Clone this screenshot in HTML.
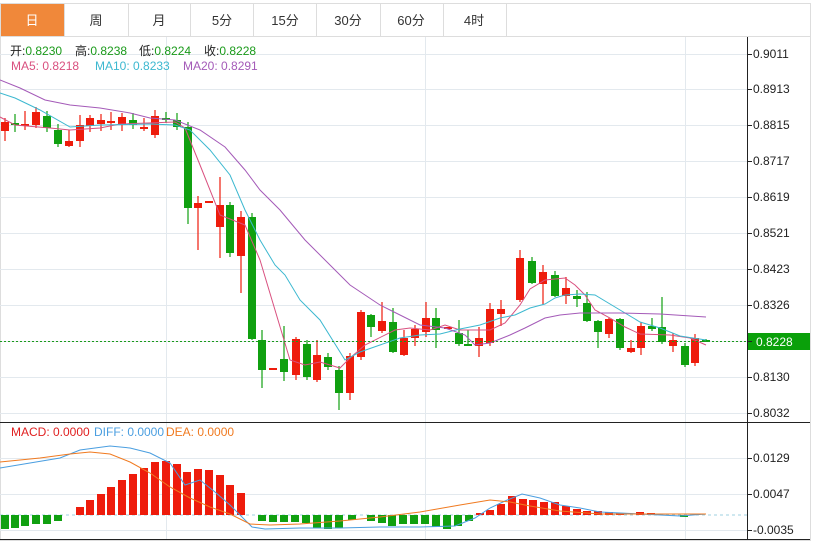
<!DOCTYPE html>
<html><head><meta charset="utf-8"><style>
body{margin:0;width:816px;height:542px;background:#fff;overflow:hidden;font-family:"Liberation Sans","Noto Sans CJK SC",sans-serif;}
</style></head><body>
<svg id="s" width="816" height="542" xmlns="http://www.w3.org/2000/svg" style="position:absolute;left:0;top:0">
<rect x="0.5" y="3.5" width="810" height="537" fill="#fff" stroke="#ddd"/>
<line x1="0" y1="36.5" x2="810" y2="36.5" stroke="#ddd"/>
<rect x="1" y="4" width="63" height="32" fill="#f0883a"/>
<g font-size="13" text-anchor="middle" fill="#333">
<text x="32" y="25" fill="#fff">日</text><text x="96" y="25">周</text><text x="159" y="25">月</text><text x="222" y="25">5分</text><text x="285" y="25">15分</text><text x="348" y="25">30分</text><text x="411" y="25">60分</text><text x="474" y="25">4时</text>
</g>
<g stroke="#ddd"><line x1="64.5" y1="4" x2="64.5" y2="36"/><line x1="128.5" y1="4" x2="128.5" y2="36"/><line x1="190.5" y1="4" x2="190.5" y2="36"/><line x1="253.5" y1="4" x2="253.5" y2="36"/><line x1="316.5" y1="4" x2="316.5" y2="36"/><line x1="380.5" y1="4" x2="380.5" y2="36"/><line x1="443.5" y1="4" x2="443.5" y2="36"/><line x1="506.5" y1="4" x2="506.5" y2="36"/></g>
<g id="grid" stroke="#e3e9ee"></g>
<g id="c"></g>
<line x1="747.5" y1="37" x2="747.5" y2="540" stroke="#222"/>
<line x1="0" y1="422.5" x2="810" y2="422.5" stroke="#222"/>
<line x1="0" y1="539.5" x2="810" y2="539.5" stroke="#222"/>
<line x1="0" y1="341.5" x2="747" y2="341.5" stroke="#1a9a1a" stroke-dasharray="2,2"/>
<rect x="748" y="333" width="62" height="17" fill="#0aa00a"/>
<text x="756" y="346" font-size="12" fill="#fff">0.8228</text>
<g font-size="12" fill="#222" id="ax"></g>
<g font-size="12">
<text x="10" y="55" fill="#222">开:<tspan fill="#1a9a1a">0.8230</tspan></text>
<text x="75" y="55" fill="#222">高:<tspan fill="#1a9a1a">0.8238</tspan></text>
<text x="139" y="55" fill="#222">低:<tspan fill="#1a9a1a">0.8224</tspan></text>
<text x="204" y="55" fill="#222">收:<tspan fill="#1a9a1a">0.8228</tspan></text>
<text x="11" y="70" fill="#d9507f">MA5: 0.8218</text>
<text x="95" y="70" fill="#3cb8d0">MA10: 0.8233</text>
<text x="183" y="70" fill="#a45ab8">MA20: 0.8291</text>
<text x="11" y="436" fill="#e02020">MACD: 0.0000</text>
<text x="94" y="436" fill="#4a9ee0">DIFF: 0.0000</text>
<text x="166" y="436" fill="#f07a20">DEA: 0.0000</text>
</g>
</svg>
<script>
var NS="http://www.w3.org/2000/svg";
function el(p,t,a){var e=document.createElementNS(NS,t);for(var k in a)e.setAttribute(k,a[k]);p.appendChild(e);return e;}
var g=document.getElementById('grid'),c=document.getElementById('c'),ax=document.getElementById('ax');
var py=[[54,'0.9011'],[89,'0.8913'],[125,'0.8815'],[161,'0.8717'],[197,'0.8619'],[233,'0.8521'],[269,'0.8423'],[305,'0.8326'],[341,''],[377,'0.8130'],[413,'0.8032'],[458,'0.0129'],[494,'0.0047'],[530,'-0.0035']];
py.forEach(function(p){el(g,'line',{x1:0,x2:747,y1:p[0]+.5,y2:p[0]+.5});el(ax,'line',{x1:747,x2:752,y1:p[0]+.5,y2:p[0]+.5,stroke:'#222'});if(p[1]){var t=el(ax,'text',{x:753,y:p[0]+4});t.textContent=p[1];}});
[166,425,685].forEach(function(x){el(g,'line',{x1:x+.5,x2:x+.5,y1:37,y2:539});});
var R='#ee1c0c',G='#10a010';
var K=[[5,131,122,118,141,'r'],[15,125,123,114,132,'g'],[25,126,124,111,130,'r'],[36,125,112,107,128,'r'],[47,116,128,111,132,'g'],[58,130,144,124,147,'g'],[69,146,141,130,147,'r'],[80,141,125,115,147,'r'],[90,126,118,115,132,'r'],[101,124,120,114,131,'r'],[111,123,121,112,130,'r'],[122,124,117,113,131,'r'],[133,120,125,113,129,'g'],[144,129,127,118,131,'r'],[155,135,116,110,138,'r'],[166,118,119,112,123,'g'],[177,120,127,113,130,'g'],[188,127,208,122,224,'g'],[198,208,203,196,250,'r'],[209,202,201,201,202,'r'],[220,227,205,177,258,'r'],[230,205,253,202,257,'g'],[241,256,217,211,293,'r'],[252,217,339,213,340,'g'],
[262,340,370,330,388,'g'],[273,368,368,368,368,'r'],[284,359,372,326,381,'g'],[296,375,339,337,380,'r'],[307,344,377,340,380,'g'],[317,380,355,340,382,'r'],[328,357,367,353,370,'g'],[339,370,393,366,410,'g'],[350,393,356,353,400,'r'],[361,357,312,310,360,'r'],[371,315,327,314,337,'g'],[382,331,321,302,333,'r'],[393,322,352,308,353,'g'],[404,355,338,330,356,'r'],[415,338,329,325,346,'r'],[426,332,318,302,337,'r'],[436,318,330,308,348,'g'],[448,327,327,327,327,'r'],[459,333,344,320,346,'g'],[468,344,344,330,346,'g'],[479,346,338,327,357,'r'],[490,343,309,303,346,'r'],[501,314,309,300,326,'r'],
[520,300,258,250,302,'r'],[532,261,283,257,284,'g'],[543,284,272,265,305,'r'],[555,275,296,271,297,'g'],[566,296,288,277,304,'r'],[577,296,299,290,307,'g'],[587,303,321,292,322,'g'],[598,321,332,320,348,'g'],[609,334,319,318,338,'r'],[620,319,348,318,350,'g'],[631,352,348,340,353,'r'],[641,348,326,322,355,'r'],[652,326,329,318,331,'g'],[662,327,342,297,344,'g'],[673,346,340,333,352,'r'],[685,346,365,343,367,'g'],[695,363,338,334,366,'r'],[706,340,341,339,342,'g']];
K.forEach(function(k){var col=k[5]=='r'?R:G;el(c,'line',{x1:k[0],x2:k[0],y1:k[3],y2:k[4],stroke:col,'stroke-width':1.2});var t=Math.min(k[1],k[2]),h=Math.max(2,Math.abs(k[1]-k[2]));el(c,'rect',{x:k[0]-4,y:t,width:8,height:h,fill:col});});
function pl(pts,col){el(c,'polyline',{points:pts,fill:'none',stroke:col,'stroke-width':1});}
pl("0,117 15,125 50,128 70,130 100,128 120,124 175,122 185,128 200,165 220,215 245,225 260,260 275,310 290,360 305,365 320,362 340,368 350,358 365,345 395,330 410,328 430,330 445,325 460,330 490,330 505,323 520,305 530,289 545,280 565,278 575,285 585,295 595,310 610,318 625,327 640,334 670,335 690,338 706,345",'#d9507f');
pl("0,93 15,98 40,110 70,127 100,125 150,124 175,125 190,130 210,150 230,175 245,210 260,240 275,265 285,275 300,300 320,320 345,360 360,352 380,345 400,338 420,335 440,334 460,329 480,325 500,318 515,315 530,308 545,304 555,298 565,295 580,294 595,295 610,304 625,313 640,322 660,328 680,336 706,340",'#3cb8d0');
pl("0,80 20,88 45,100 70,105 100,108 130,113 150,118 175,120 200,130 225,147 245,170 260,190 280,210 305,240 330,265 350,285 380,305 390,310 420,325 445,328 465,335 475,345 490,343 510,335 525,328 545,318 560,315 580,313 620,313 660,314 706,317",'#a45ab8');
el(c,'line',{x1:0,x2:747,y1:515,y2:515,stroke:'#9fd0e0','stroke-dasharray':'3,3'});
var M=[[5,529],[15,528],[25,526],[36,524],[47,524],[58,521],[80,507],[90,500],[101,494],[111,487],[122,480],[133,474],[144,468],[155,462],[166,461],[177,464],[187,472],[198,469],[209,470],[220,475],[230,485],[241,493],[262,521],[273,522],[284,522],[295,522],[306,523],[317,528],[328,529],[339,528],[352,520],[371,521],[382,523],[392,526],[403,524],[414,524],[425,524],[436,527],[447,529],[458,526],[469,521],[480,513],[490,510],[501,504],[512,496],[523,499],[533,500],[544,502],[555,502],[566,506],[577,509],[587,511],[598,511],[609,512],[620,513],[640,512],[651,513],[684,517]];
M.forEach(function(m){var up=m[1]<515;el(c,'rect',{x:m[0]-4,y:up?m[1]:515,width:8,height:Math.abs(m[1]-515)||1,fill:up?R:G});});
pl("0,468 30,463 60,458 80,450 110,446 130,448 150,453 170,463 185,485 200,480 215,492 230,505 240,515 252,527 265,529 300,528 340,528 380,527 420,527 455,526 475,518 490,508 505,501 522,494 540,498 560,505 580,508 600,512 640,514 680,516 706,514",'#4a9ee0');
pl("0,462 40,458 70,454 90,452 110,454 130,462 150,473 170,487 190,498 210,507 230,514 250,524 270,525 300,524 340,521 380,517 420,512 460,505 490,500 510,502 530,506 560,511 600,514 706,514",'#f07a20');
</script>
</body></html>
